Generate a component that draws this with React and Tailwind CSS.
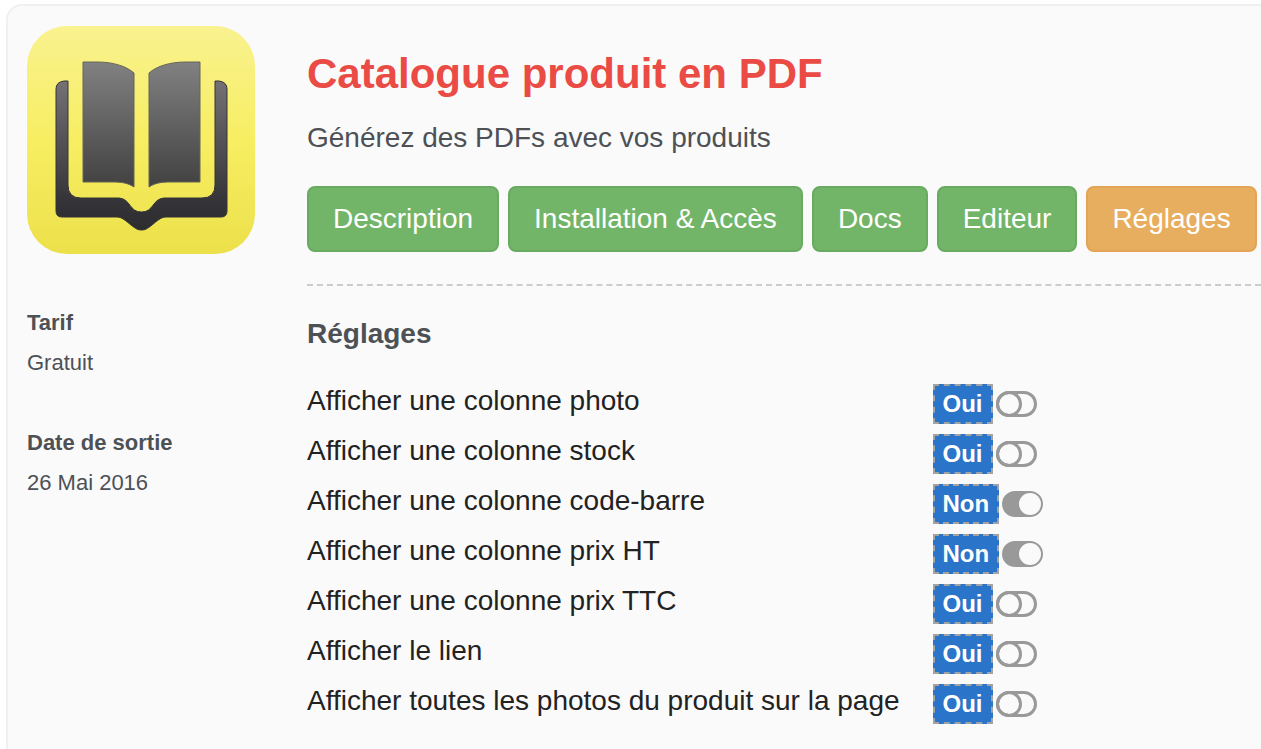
import { useState } from 'react'

const TABS = [
  { id: 'description', label: 'Description' },
  { id: 'install', label: 'Installation & Accès' },
  { id: 'docs', label: 'Docs' },
  { id: 'editor', label: 'Editeur' },
  { id: 'settings', label: 'Réglages' },
]

// `off` drives the switch: a filled switch turns the option off.
const OPTIONS = [
  { id: 'photo', label: 'Afficher une colonne photo', off: false },
  { id: 'stock', label: 'Afficher une colonne stock', off: false },
  { id: 'barcode', label: 'Afficher une colonne code-barre', off: true },
  { id: 'ht', label: 'Afficher une colonne prix HT', off: true },
  { id: 'ttc', label: 'Afficher une colonne prix TTC', off: false },
  { id: 'link', label: 'Afficher le lien', off: false },
  { id: 'all-photos', label: 'Afficher toutes les photos du produit sur la page', off: false },
]

function BookLogo() {
  return (
    <svg viewBox="0 0 228 228" className="w-full" role="img" aria-label="Catalogue">
      <defs>
        <linearGradient id="tile" x1="0" y1="0" x2="0" y2="1">
          <stop offset="0" stopColor="#f9f28f" />
          <stop offset="0.5" stopColor="#f7ee62" />
          <stop offset="1" stopColor="#ece04a" />
        </linearGradient>
        <linearGradient id="page" x1="0" y1="0" x2="0" y2="1">
          <stop offset="0" stopColor="#818181" />
          <stop offset="1" stopColor="#414141" />
        </linearGradient>
        <linearGradient id="cover" x1="0" y1="0" x2="0" y2="1">
          <stop offset="0" stopColor="#757175" />
          <stop offset="0.5" stopColor="#4d4b4e" />
          <stop offset="0.8" stopColor="#353438" />
          <stop offset="1" stopColor="#2c2b2e" />
        </linearGradient>
      </defs>
      <rect width="228" height="228" rx="40" fill="url(#tile)" />
      <g fill="url(#page)" stroke="#66645a" strokeWidth="1">
        <path d="M56 36H70C86 36 99 40 107 47V161C101 157 95 156 85 156H56Z" />
        <path d="M173 36H159C143 36 130 40 122 47V161C128 157 134 156 144 156H173Z" />
      </g>
      <path
        d="M41 55H37Q29 56 29 63V185Q29 191 35 191H90C95 191 99 195 104 199C109 203 111 204 114.500 204C118 204 120 203 125 199C130 195 134 191 139 191H194Q200 191 200 185V63Q200 56 192 55H188V159Q188 172 175 172H137C125 173 127 186 114.500 186C102 186 104 173 92 172H54Q41 172 41 159Z"
        fill="url(#cover)"
        stroke="#353438"
        strokeWidth="1"
      />
    </svg>
  )
}

function OptionRow({ option, onToggle }) {
  return (
    <>
      <label htmlFor={option.id} className="text-[28px] leading-8 text-[#222]">
        {option.label}
      </label>
      <div className="flex h-[50px] items-center gap-[3px] pt-[5px]">
        <span className="border-2 border-dashed border-[#a3a3a3] bg-[#2a74c9] px-2 text-2xl leading-9 font-bold text-white">
          {option.off ? 'Non' : 'Oui'}
        </span>
        <input
          id={option.id}
          type="checkbox"
          checked={option.off}
          onChange={() => onToggle(option.id)}
          className="relative h-[26px] w-[41px] cursor-pointer appearance-none rounded-full border-3 border-[#999] before:absolute before:-top-[3px] before:-left-[3px] before:size-[26px] before:rounded-full before:border-3 before:border-[#999] before:content-[''] checked:bg-[#999] checked:before:-top-px checked:before:-right-px checked:before:left-auto checked:before:size-[22px] checked:before:border-0 checked:before:bg-[#fafafa]"
        />
      </div>
    </>
  )
}

function Fact({ title, children }) {
  return (
    <div>
      <dt className="font-bold">{title}</dt>
      <dd>{children}</dd>
    </div>
  )
}

export default function App() {
  const [tab, setTab] = useState('settings')
  const [options, setOptions] = useState(OPTIONS)

  const toggle = (id) =>
    setOptions((rows) => rows.map((r) => (r.id === id ? { ...r, off: !r.off } : r)))

  return (
    <div className="h-screen overflow-hidden bg-white pt-1 pl-1.5 font-['Liberation_Sans',Arial,sans-serif] text-[#4d5156]">
      <div className="flex h-full gap-[52px] rounded-tl-2xl border-t-2 border-l-2 border-[#f0f0f0] bg-[#fafafa] pt-5 pl-[19px]">
        <aside className="w-[228px] shrink-0">
          <BookLogo />
          <dl className="mt-[49px] flex flex-col gap-10 text-[22px] leading-10">
            <Fact title="Tarif">Gratuit</Fact>
            <Fact title="Date de sortie">26 Mai 2016</Fact>
          </dl>
        </aside>

        <main className="min-w-0 flex-1 pt-6">
          <h1 className="text-[42px] leading-12 font-bold text-[#ea4b44]">Catalogue produit en PDF</h1>
          <p className="mt-6 text-[28px] leading-8">Générez des PDFs avec vos produits</p>

          <nav className="mt-8 flex gap-[9px]">
            {TABS.map((t) => (
              <button
                key={t.id}
                type="button"
                onClick={() => setTab(t.id)}
                className={`shrink-0 cursor-pointer rounded-lg border-2 px-6 py-[15px] text-[28px] leading-8 whitespace-nowrap text-white ${
                  tab === t.id ? 'border-[#e3a455] bg-[#e8ae5f]' : 'border-[#68ab60] bg-[#72b568]'
                }`}
              >
                {t.label}
              </button>
            ))}
          </nav>

          <hr className="mt-8 border-t-2 border-dashed border-[#ccc]" />

          <h2 className="mt-8 text-[28px] leading-8 font-bold">Réglages</h2>
          <div className="mt-[26px] grid grid-cols-[max-content_auto] items-center gap-x-[33px]">
            {options.map((o) => (
              <OptionRow key={o.id} option={o} onToggle={toggle} />
            ))}
          </div>
        </main>
      </div>
    </div>
  )
}
